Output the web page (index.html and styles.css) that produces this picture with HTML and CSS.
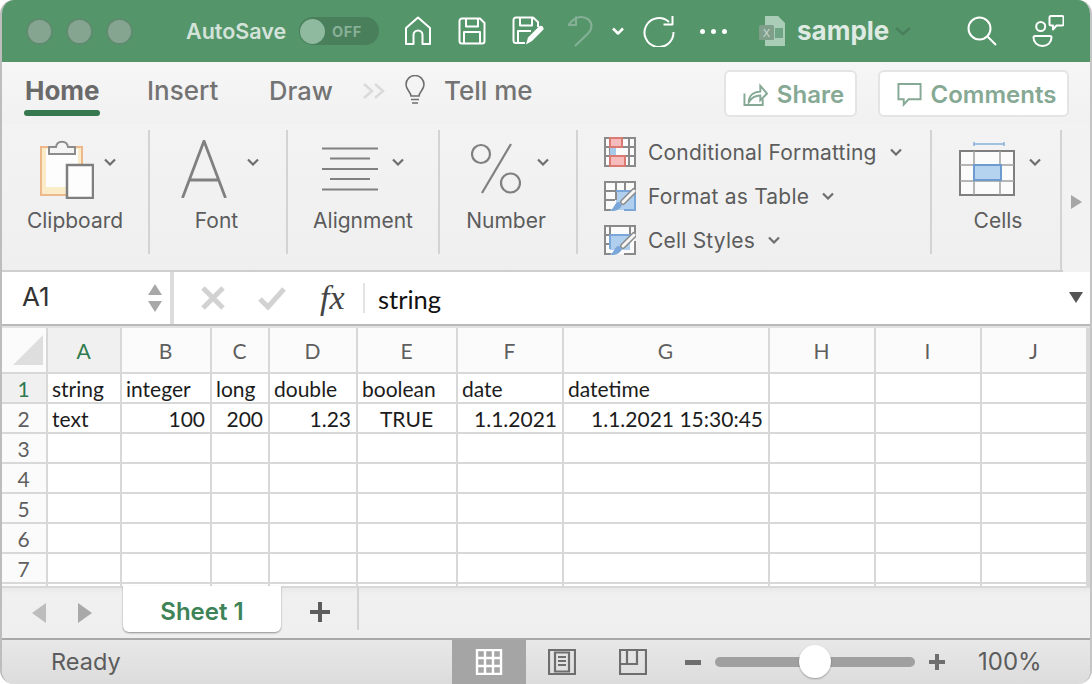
FILE: index.html
```html
<!DOCTYPE html>
<html lang="en">
<head>
    <meta charset="UTF-8">
    <meta name="viewport" content="width=device-width, initial-scale=1.0">
    <title>sample</title>
    <link rel="stylesheet" href="styles.css">
</head>
<body>
<div class="window">

    <!-- Title bar -->
    <header class="titlebar">
        <div class="lights"><span></span><span></span><span></span></div>
        <span class="autosave">AutoSave</span>
        <div class="toggle"><span class="knob"></span><span class="off">OFF</span></div>
        <svg class="tb home" viewBox="0 0 28 30"><path d="M2 28V12L14 1.500 26 12v16h-7.500V19a4.500 4.500 0 0 0-9 0v9z"/></svg>
        <svg class="tb save" viewBox="0 0 28 28"><path d="M4 1.500h18l4.500 4.500v18a2.500 2.500 0 0 1-2.500 2.500H4A2.500 2.500 0 0 1 1.500 24V4A2.500 2.500 0 0 1 4 1.500zM8 1.500v8h12v-8M6 26.500V15h16v11.500"/></svg>
        <svg class="tb saveas" viewBox="0 0 32 30"><path d="M13 27H4a2.500 2.500 0 0 1-2.500-2.500V4A2.500 2.500 0 0 1 4 1.500h17L26 6v5M8 1.500v8h12v-8M6 27V15h13"/><path class="fill" d="M14 28.500l2-7 11-11c1.500-1.500 5-.5 4.500 3L20 25z"/></svg>
        <svg class="tb undo dim" viewBox="0 0 26 32"><path d="M1 10h8V1.500M1.500 10C6 4 10 2 14 2c6 0 10.500 4 10.500 9 0 3-1.500 5.500-3.500 7.500L8 31"/></svg>
        <svg class="tb chev" viewBox="0 0 12 8"><path d="M1 1.500l5 5 5-5"/></svg>
        <svg class="tb redo" viewBox="0 0 32 32"><path d="M26 7A14.500 14.500 0 1 0 30.500 17M20.500 9.500h9V1"/></svg>
        <div class="dots"><span></span><span></span><span></span></div>
        <svg class="fileicon" viewBox="0 0 26 30">
            <path fill="#a9cdb6" d="M6 0h13l7 7v23H6z"/>
            <rect x="0" y="9" width="15" height="15" rx="1.500" fill="#7f9f8b"/>
            <rect x="16" y="12" width="8" height="10" fill="#6fa584"/>
            <text x="7.500" y="21" class="filex">X</text>
        </svg>
        <span class="filename">sample</span>
        <svg class="tb filechev" viewBox="0 0 16 9"><path d="M1 1l7 6 7-6"/></svg>
        <svg class="tb search" viewBox="0 0 30 30"><circle cx="12.500" cy="12.500" r="11"/><path d="M20.500 20.500l8.500 8.500"/></svg>
        <svg class="tb person" viewBox="0 0 32 32"><circle cx="8.700" cy="11.500" r="4.500"/><path d="M3 21h15a1.500 1.500 0 0 1 1.500 1.500c0 5-4 8.500-9 8.500s-9-3.500-9-8.500A1.500 1.500 0 0 1 3 21zM19 1h11a1.500 1.500 0 0 1 1.500 1.500V9a1.500 1.500 0 0 1-1.500 1.500h-5.500l-3.500 4v-4h-2A1.500 1.500 0 0 1 17.500 9V2.500A1.500 1.500 0 0 1 19 1z"/></svg>
    </header>

    <!-- Tabs row -->
    <nav class="tabs">
        <a class="tab active">Home</a>
        <a class="tab insert">Insert</a>
        <a class="tab draw">Draw</a>
        <svg class="more" viewBox="0 0 24 18"><path d="M2 2l8 7-8 7M13 2l8 7-8 7"/></svg>
        <svg class="bulb" viewBox="0 0 20 32"><path d="M6 21c0-4-5-6-5-11.500a9 9 0 0 1 18 0C19 15 14 17 14 21zM6 24.500h8M7 28h6"/></svg>
        <a class="tab tell">Tell me</a>
        <button class="action share">
            <svg viewBox="0 0 26 26"><path d="M1.500 12v12h19v-6M6 21c0-7 5-11 12-11V4l7 8-7 7v-5c-5 0-9 2-12 7z"/></svg>
            Share
        </button>
        <button class="action comments">
            <svg viewBox="0 0 26 26"><path d="M1.500 2h23v16H12l-5 5.500V18H1.500z"/></svg>
            Comments
        </button>
    </nav>

    <!-- Ribbon -->
    <section class="ribbon">
        <div class="group g-clip">
            <div class="group-top">
                <svg class="ic-clip" viewBox="0 0 54 60">
                    <rect x="1" y="8" width="41" height="48" fill="#faecc8" stroke="#eeb98a" stroke-width="2"/>
                    <rect x="6" y="10" width="32" height="38" fill="#fdfdfd"/>
                    <path d="M9 15V8h7c1-7 11-7 12 0h7v7z" fill="#f4f4f4" stroke="#8c8c8c" stroke-width="2"/>
                    <rect x="27" y="26" width="26" height="33" fill="#fdfdfd" stroke="#7f7f7f" stroke-width="2.500"/>
                </svg>
                <svg class="caret" viewBox="0 0 12 8"><path d="M1 1.500l5 5 5-5"/></svg>
            </div>
            <span class="group-label">Clipboard</span>
        </div>
        <div class="group g-font">
            <div class="group-top">
                <svg class="ic-font" viewBox="0 0 46 58"><path d="M1.500 58L23 1l21.500 57M8 40h30"/></svg>
                <svg class="caret" viewBox="0 0 12 8"><path d="M1 1.500l5 5 5-5"/></svg>
            </div>
            <span class="group-label">Font</span>
        </div>
        <div class="group g-align">
            <div class="group-top">
                <svg class="ic-align" viewBox="0 0 56 44"><path d="M0 1.500h56M8 11.500h40M0 22h56M8 32h40M0 42.500h56"/></svg>
                <svg class="caret" viewBox="0 0 12 8"><path d="M1 1.500l5 5 5-5"/></svg>
            </div>
            <span class="group-label">Alignment</span>
        </div>
        <div class="group g-num">
            <div class="group-top">
                <svg class="ic-num" viewBox="0 0 50 52"><circle cx="10" cy="11" r="9"/><circle cx="39.500" cy="40" r="9.500"/><path d="M40 1L11 50"/></svg>
                <svg class="caret" viewBox="0 0 12 8"><path d="M1 1.500l5 5 5-5"/></svg>
            </div>
            <span class="group-label">Number</span>
        </div>
        <div class="group g-styles">
            <div class="style-row">
                <svg class="ic-style" viewBox="0 0 32 30">
                    <rect x="1" y="1" width="30" height="28" fill="#fbfbfb"/>
                    <path class="gl" d="M1 1h30v28H1zM1 10h30M1 19h30M6 1v28M18 1v28M25 1v28"/>
                    <rect x="6" y="10" width="6" height="9" fill="#a9c9ea"/>
                    <rect x="13" y="11" width="11" height="7" fill="#fbfbfb"/>
                    <rect x="6" y="1" width="12" height="9" fill="#f6bcbc" stroke="#db7a72" stroke-width="2"/>
                    <rect x="6" y="19" width="15" height="10" fill="#f6bcbc" stroke="#db7a72" stroke-width="2"/>
                </svg>
                <span>Conditional Formatting</span>
                <svg class="caret" viewBox="0 0 12 8"><path d="M1 1.500l5 5 5-5"/></svg>
            </div>
            <div class="style-row">
                <svg class="ic-style" viewBox="0 0 32 30">
                    <rect x="1" y="1" width="30" height="28" fill="#fbfbfb"/>
                    <rect x="12" y="10" width="19" height="19" fill="#b0cfee"/>
                    <path class="gl" d="M31 9V1H1v28h6M1 10h30M1 19h10M12 1v18M21 1v9"/>
                    <path class="bl" d="M12 10h19v19H20"/>
                    <path class="brush-o" d="M30 10L19 21"/>
                    <path class="brush-i" d="M30 10L19 21"/>
                    <path class="brush-h" d="M5 30c5 1 11-1 13-6l-3-3c-5 0-4 7-10 9z"/>
                </svg>
                <span>Format as Table</span>
                <svg class="caret" viewBox="0 0 12 8"><path d="M1 1.500l5 5 5-5"/></svg>
            </div>
            <div class="style-row">
                <svg class="ic-style" viewBox="0 0 32 30">
                    <rect x="1" y="1" width="30" height="28" fill="#fbfbfb"/>
                    <rect x="6" y="10" width="20" height="15" fill="#b0cfee"/>
                    <path class="gl" d="M31 8V1H1v28h6M31 16v13H20M6 1v20M1 10h5M1 19h5M26 1v9"/>
                    <path class="bl" d="M6 10h21M6 10v14"/>
                    <path class="brush-o" d="M30 10L19 21"/>
                    <path class="brush-i" d="M30 10L19 21"/>
                    <path class="brush-h" d="M5 30c5 1 11-1 13-6l-3-3c-5 0-4 7-10 9z"/>
                </svg>
                <span>Cell Styles</span>
                <svg class="caret" viewBox="0 0 12 8"><path d="M1 1.500l5 5 5-5"/></svg>
            </div>
        </div>
        <div class="group g-cells">
            <div class="group-top">
                <svg class="ic-cells" viewBox="0 0 56 54">
                    <path d="M15 2h30M15 0v4M45 0v4" stroke="#84b2de" stroke-width="1.500" fill="none"/>
                    <rect x="1" y="9" width="54" height="44" fill="#fbfbfb" stroke="#7f7f7f" stroke-width="2"/>
                    <path d="M1 23h54M1 39h54M15 9v44M41 9v44" stroke="#a0a0a0" stroke-width="1.500"/>
                    <rect x="15" y="23" width="27" height="15" fill="#b5d2ee" stroke="#6d9bd0" stroke-width="2"/>
                </svg>
                <svg class="caret" viewBox="0 0 12 8"><path d="M1 1.500l5 5 5-5"/></svg>
            </div>
            <span class="group-label">Cells</span>
        </div>
        <div class="ribbon-end"><span class="tri-right"></span></div>
    </section>

    <!-- Formula bar -->
    <section class="formula">
        <div class="namebox">
            <span class="nameval">A1</span>
            <div class="spin"><i class="up"></i><i class="down"></i></div>
        </div>
        <div class="fbar">
            <svg class="f-x" viewBox="0 0 24 24"><path d="M2 2l20 20M22 2L2 22"/></svg>
            <svg class="f-ok" viewBox="0 0 28 24"><path d="M2 13l8 8L26 3"/></svg>
            <span class="fx">fx</span>
            <span class="fsep"></span>
            <span class="fval">string</span>
            <i class="fdrop"></i>
        </div>
    </section>

    <!-- Sheet -->
    <section class="sheet">
        <table class="cells">
            <colgroup>
                <col class="c0"><col class="ca"><col class="cb"><col class="cc"><col class="cd"><col class="ce"><col class="cf"><col class="cg"><col class="cx"><col class="cx"><col class="cx"><col>
            </colgroup>
            <thead>
                <tr>
                    <th class="corner"><span></span></th>
                    <th class="sel">A</th><th>B</th><th>C</th><th>D</th><th>E</th><th>F</th><th>G</th><th>H</th><th>I</th><th>J</th><th></th>
                </tr>
            </thead>
            <tbody>
                <tr>
                    <th class="sel">1</th>
                    <td>string</td><td>integer</td><td>long</td><td>double</td><td>boolean</td><td>date</td><td>datetime</td><td></td><td></td><td></td><td></td>
                </tr>
                <tr>
                    <th>2</th>
                    <td>text</td><td class="num">100</td><td class="num">200</td><td class="num">1.23</td><td class="mid">TRUE</td><td class="num">1.1.2021</td><td class="num">1.1.2021 15:30:45</td><td></td><td></td><td></td><td></td>
                </tr>
                <tr><th>3</th><td></td><td></td><td></td><td></td><td></td><td></td><td></td><td></td><td></td><td></td><td></td></tr>
                <tr><th>4</th><td></td><td></td><td></td><td></td><td></td><td></td><td></td><td></td><td></td><td></td><td></td></tr>
                <tr><th>5</th><td></td><td></td><td></td><td></td><td></td><td></td><td></td><td></td><td></td><td></td><td></td></tr>
                <tr><th>6</th><td></td><td></td><td></td><td></td><td></td><td></td><td></td><td></td><td></td><td></td><td></td></tr>
                <tr><th>7</th><td></td><td></td><td></td><td></td><td></td><td></td><td></td><td></td><td></td><td></td><td></td></tr>
                <tr><th></th><td></td><td></td><td></td><td></td><td></td><td></td><td></td><td></td><td></td><td></td><td></td></tr>
            </tbody>
        </table>
    </section>

    <!-- Sheet tabs -->
    <section class="sheetbar">
        <i class="nav left"></i>
        <i class="nav right"></i>
        <div class="sheettab">Sheet 1</div>
        <span class="plus"></span>
        <span class="barsep"></span>
    </section>

    <!-- Status bar -->
    <footer class="status">
        <span class="ready">Ready</span>
        <div class="view active">
            <svg viewBox="0 0 26 26"><path class="vw-on" d="M1 1h24v24H1zM9 1v24M17 1v24M1 9h24M1 17h24"/></svg>
        </div>
        <div class="view">
            <svg viewBox="0 0 28 26"><path class="vw" d="M1 1h26v24H1zM7 3.500h14v19H7z"/><path class="vw" d="M10 8h8M10 12h8M10 16h8"/></svg>
        </div>
        <div class="view">
            <svg viewBox="0 0 28 26"><path class="vw" d="M1 1h26v24H1zM1 15h17V1M8 1v14"/></svg>
        </div>
        <span class="zoom-sign minus"></span>
        <div class="slider"><span class="thumb"></span></div>
        <span class="zoom-sign pluss"></span>
        <span class="pct">100%</span>
    </footer>
</div>
</body>
</html>
```

FILE: styles.css
```css
/* General */
* {
    box-sizing: border-box;
}

html, body {
    margin: 0;
    padding: 0;
    background: #fff;
    height: 684px;
    overflow: hidden;
}

body {
    font-family: Inter, "Liberation Sans", sans-serif;
    color: #5c5c5c;
}

svg {
    display: block;
    flex: none;
}

.window {
    width: 1092px;
    height: 684px;
    display: flex;
    flex-direction: column;
    border-radius: 14px;
    overflow: hidden;
    border-left: 2px solid #bdbdbd;
    border-right: 2px solid #c4c4c4;
    background: #f2f2f2;
}

/* Title bar */
.titlebar {
    height: 62px;
    flex: none;
    margin: 0 -2px;
    background: #54956a;
    display: flex;
    align-items: center;
    position: relative;
}

.lights {
    display: flex;
    gap: 13px;
    margin-left: 26px;
}

.lights span {
    width: 27px;
    height: 27px;
    border-radius: 50%;
    background: #86a590;
    border: 2px solid #5f8b6f;
}

.autosave {
    margin-left: 53px;
    width: 113px;
    font-size: 21.500px;
    font-weight: 600;
    color: #d3e3d9;
    white-space: nowrap;
}

.toggle {
    width: 80px;
    height: 28px;
    border-radius: 14px;
    background: #4a7f5c;
    display: flex;
    align-items: center;
    padding-left: 1px;
}

.knob {
    width: 25px;
    height: 25px;
    border-radius: 50%;
    background: #8fba9f;
}

.off {
    margin-left: 7px;
    font-size: 14.500px;
    font-weight: 700;
    letter-spacing: .5px;
    color: #88b096;
}

.tb {
    fill: none;
    stroke: #fff;
    stroke-width: 2;
    stroke-linejoin: round;
}

.tb .fill {
    fill: #fff;
    stroke: none;
}

.tb.dim {
    stroke: #86b196;
}

.home { width: 28px; height: 30px; margin-left: 25px; }
.save { width: 28px; height: 28px; margin-left: 26px; }
.saveas { width: 32px; height: 30px; margin-left: 26px; }
.undo { width: 26px; height: 32px; margin-left: 23px; }
.chev { width: 12px; height: 8px; margin-left: 19px; stroke-width: 2.500; }
.redo { width: 32px; height: 32px; margin-left: 19px; }

.dots {
    display: flex;
    gap: 6px;
    margin-left: 25px;
}

.dots span {
    width: 5px;
    height: 5px;
    border-radius: 50%;
    background: #fff;
}

.fileicon {
    width: 26px;
    height: 30px;
    margin-left: 32px;
}

.filex {
    font-size: 11px;
    fill: #c7d8cd;
    text-anchor: middle;
}

.filename {
    margin-left: 12px;
    margin-top: -2px;
    font-size: 26px;
    font-weight: 700;
    color: #dfeae3;
}

.filechev {
    width: 16px;
    height: 9px;
    margin-left: 6px;
    stroke: #4a7f5c;
    stroke-width: 2.500;
}

.search { width: 30px; height: 30px; margin-left: 56px; }
.person { width: 32px; height: 32px; margin-left: 35px; }

/* Tabs */
.tabs {
    height: 62px;
    flex: none;
    display: flex;
    align-items: center;
    padding-left: 23px;
    background: linear-gradient(#f6f6f6, #f1f1f1);
    position: relative;
}

.tab {
    font-size: 26px;
    font-weight: 500;
    color: #737373;
    margin-top: -5px;
}

.tab.active {
    font-weight: 700;
    width: 122px;
    color: #6a6a6a;
    position: relative;
}

.tab.active::after {
    content: "";
    position: absolute;
    left: -1px;
    bottom: -10px;
    width: 76px;
    height: 6px;
    border-radius: 3px;
    background: #37784f;
}

.insert { width: 122px; }
.draw { width: 93px; font-size: 25.500px; }

.more {
    width: 24px;
    height: 18px;
    fill: none;
    stroke: #dadada;
    stroke-width: 2.500;
    margin-top: -4px;
}

.bulb {
    width: 20px;
    height: 32px;
    margin-left: 19px;
    margin-top: -4px;
    fill: none;
    stroke: #6f6f6f;
    stroke-width: 1.600;
}

.tell { margin-left: 19px; }

.action {
    height: 47px;
    background: #fff;
    border: 2px solid #e4e4e4;
    border-radius: 6px;
    display: flex;
    align-items: center;
    justify-content: center;
    gap: 9px;
    font: 600 24px Inter, "Liberation Sans", sans-serif;
    color: #85a994;
    padding: 3px 0 0 6px;
}

.action svg {
    width: 25px;
    height: 25px;
    fill: none;
    stroke: #85a994;
    stroke-width: 2;
}

.share { width: 133px; margin-left: auto; }
.comments { width: 191px; margin-left: 21px; margin-right: 21px; }

/* Ribbon */
.ribbon {
    height: 148px;
    flex: none;
    display: flex;
    padding-top: 6px;
    background: linear-gradient(#f3f3f3, #efefef);
    border-bottom: 2px solid #cfcfcf;
    margin-right: 27px;
    position: relative;
}

.group {
    height: 124px;
    flex: none;
    border-right: 2px solid #d3d3d3;
    display: flex;
    flex-direction: column;
    align-items: center;
}

.group-top {
    height: 78px;
    display: flex;
    align-items: center;
    gap: 10px;
}

.group-label {
    font-size: 21px;
    line-height: 26px;
    color: #5c5c5c;
}

.caret {
    width: 12px;
    height: 8px;
    fill: none;
    stroke: #6e6e6e;
    stroke-width: 2.200;
    margin-top: -14px;
}

.g-clip { width: 148px; }
.g-clip .group-top { padding-left: 6px; }
.g-font { width: 138px; }
.g-font .group-label { margin-left: -3px; }
.g-align { width: 152px; }
.g-align .group-top { gap: 6px; }
.g-num { width: 138px; }
.g-num .group-top { gap: 8px; padding-left: 4px; }
.g-num .group-label { margin-left: -4px; }
.g-styles { width: 354px; padding-left: 26px; align-items: flex-start; }
.g-cells { width: 130px; height: 140px; }
.g-cells .group-top { gap: 14px; padding-left: 8px; }
.g-cells .group-label { margin-left: 4px; }

.ic-clip { width: 54px; height: 60px; }
.ic-font { width: 46px; height: 58px; fill: none; stroke: #808080; stroke-width: 2.800; margin-left: 4px; margin-right: 10px; }
.ic-align { width: 56px; height: 44px; fill: none; stroke: #808080; stroke-width: 2; margin-right: 8px; }
.ic-num { width: 50px; height: 52px; fill: none; stroke: #808080; stroke-width: 2.200; margin-right: 8px; }
.ic-cells { width: 56px; height: 54px; }

.style-row {
    height: 44px;
    flex: none;
    display: flex;
    align-items: center;
    gap: 12px;
    font-size: 21px;
    letter-spacing: .2px;
    color: #5c5c5c;
}

.style-row .caret {
    margin-top: 0;
    margin-left: 1px;
}

.ic-style {
    width: 32px;
    height: 30px;
    fill: none;
}

.gl {
    fill: none;
    stroke: #8a8a8a;
    stroke-width: 2;
}

.bl {
    fill: none;
    stroke: #7ba6d8;
    stroke-width: 2;
}

.brush-o {
    stroke: #8a8a8a;
    stroke-width: 6;
    stroke-linecap: round;
}

.brush-i {
    stroke: #f6f6f6;
    stroke-width: 3;
    stroke-linecap: round;
}

.brush-h {
    fill: #7ba6d8;
}

.ribbon-end {
    position: absolute;
    right: -27px;
    top: 0;
    bottom: 0;
    width: 27px;
    display: flex;
    align-items: center;
    justify-content: center;
}

.tri-right {
    border-left: 11px solid #a6a6a6;
    border-top: 7px solid transparent;
    border-bottom: 7px solid transparent;
    margin-top: 10px;
}

/* Formula bar */
.formula {
    height: 54px;
    flex: none;
    display: flex;
    gap: 4px;
    background: #dcdcdc;
    border-bottom: 2px solid #b9b9b9;
}

.namebox {
    width: 168px;
    background: #fff;
    display: flex;
    align-items: center;
    justify-content: space-between;
    padding: 0 8px 0 20px;
    font-size: 26px;
    color: #333;
}

.nameval {
    margin-top: -3px;
}

.spin {
    display: flex;
    flex-direction: column;
    gap: 6px;
}

.spin i {
    border-left: 7px solid transparent;
    border-right: 7px solid transparent;
}

.spin .up { border-bottom: 11px solid #a8a8a8; }
.spin .down { border-top: 11px solid #a8a8a8; }

.fbar {
    flex: 1;
    background: #fff;
    display: flex;
    align-items: center;
    position: relative;
}

.f-x {
    width: 24px;
    height: 24px;
    margin-left: 27px;
    fill: none;
    stroke: #d2d2d2;
    stroke-width: 5;
}

.f-ok {
    width: 28px;
    height: 24px;
    margin-left: 33px;
    fill: none;
    stroke: #d2d2d2;
    stroke-width: 5;
}

.fx {
    margin-left: 34px;
    font: italic 34px "Liberation Serif", serif;
    color: #444;
    width: 43px;
}

.fsep {
    width: 2px;
    height: 30px;
    background: #e3e3e3;
}

.fval {
    margin-left: 13px;
    margin-top: 2px;
    font: 25.500px Lato, "Open Sans", sans-serif;
    color: #111;
}

.fdrop {
    position: absolute;
    right: 7px;
    top: 20px;
    border-left: 7px solid transparent;
    border-right: 7px solid transparent;
    border-top: 11px solid #555;
}

/* Sheet */
.sheet {
    height: 260px;
    flex: none;
    overflow: hidden;
    background: #fff;
    border-top: 2px solid #e2e2e2;
}

.cells {
    table-layout: fixed;
    border-collapse: separate;
    border-spacing: 0;
    width: 1088px;
    font: 21px Lato, "Open Sans", sans-serif;
    color: #1c1c1c;
}

.c0 { width: 46px; }
.ca { width: 74px; }
.cb { width: 90px; }
.cc { width: 58px; }
.cd { width: 88px; }
.ce { width: 100px; }
.cf { width: 106px; }
.cg { width: 206px; }
.cx { width: 106px; }

.cells th, .cells td {
    height: 30px;
    padding: 0 5px 0 4px;
    border-right: 2px solid #d8d8d8;
    border-bottom: 2px solid #d8d8d8;
    white-space: nowrap;
    overflow: hidden;
}

.cells th {
    font-weight: 400;
    color: #5f5f5f;
    text-align: center;
    background: #fbfbfb;
}

.cells thead th {
    height: 46px;
}

.cells th.sel {
    color: #2f7a4d;
    background: #f0f0f0;
}

.cells td.num { text-align: right; }
.cells td.mid { text-align: center; }

.cells .corner {
    padding: 0;
    background: #fbfbfb;
}

.corner span {
    display: block;
    width: 0;
    height: 0;
    margin: 0 0 0 11px;
    border-left: 30px solid transparent;
    border-bottom: 30px solid #dedede;
}

/* Sheet tabs */
.sheetbar {
    height: 52px;
    flex: none;
    display: flex;
    align-items: flex-start;
    background: linear-gradient(#e9e9e9 0, #f0f0f0 6px, #efefef);
    border-top: 2px solid #d8d8d8;
}

.nav {
    margin-top: 15px;
    border-top: 10px solid transparent;
    border-bottom: 10px solid transparent;
}

.nav.left {
    margin-left: 30px;
    border-right: 14px solid #bdbdbd;
}

.nav.right {
    margin-left: 32px;
    border-left: 14px solid #a9a9a9;
}

.sheettab {
    margin-left: 31px;
    margin-top: -2px;
    width: 158px;
    height: 46px;
    padding-top: 5px;
    background: #fff;
    border-radius: 0 0 6px 6px;
    box-shadow: 0 1px 2px rgba(0, 0, 0, .4);
    font-size: 24px;
    font-weight: 600;
    color: #3e8258;
    display: flex;
    align-items: center;
    justify-content: center;
}

.plus {
    width: 20px;
    height: 20px;
    margin: 14px 0 0 29px;
    background:
        linear-gradient(#5c5c5c, #5c5c5c) center / 100% 4px no-repeat,
        linear-gradient(#5c5c5c, #5c5c5c) center / 4px 100% no-repeat;
}

.barsep {
    width: 2px;
    height: 42px;
    margin-left: 27px;
    background: #d3d3d3;
}

/* Status bar */
.status {
    flex: 1;
    display: flex;
    align-items: center;
    background: linear-gradient(#e8e8e8, #dcdcdc);
    border-top: 2px solid #a8a8a8;
    font-size: 23.500px;
    color: #5c5c5c;
}

.ready {
    margin-left: 49px;
    margin-top: -2px;
    width: 401px;
}

.view {
    width: 71px;
    height: 100%;
    display: flex;
    align-items: center;
    justify-content: center;
}

.view.active {
    width: 74px;
    background: #a5a5a5;
}

.view svg {
    width: 28px;
    height: 26px;
}

.vw {
    fill: none;
    stroke: #6e6e6e;
    stroke-width: 2.200;
}

.vw-on {
    fill: none;
    stroke: #fff;
    stroke-width: 2.400;
}

.zoom-sign {
    width: 16px;
    height: 5px;
    background: #6e6e6e;
}

.minus { margin-left: 17px; }

.slider {
    width: 200px;
    height: 10px;
    margin: 0 14px;
    border-radius: 5px;
    background: #a0a0a0;
    position: relative;
}

.thumb {
    position: absolute;
    left: 84px;
    top: -12px;
    width: 32px;
    height: 33px;
    border-radius: 50%;
    background: #fff;
    box-shadow: 0 1px 2px rgba(0, 0, 0, .3);
}

.pluss {
    background:
        linear-gradient(#6e6e6e, #6e6e6e) center / 100% 4px no-repeat,
        linear-gradient(#6e6e6e, #6e6e6e) center / 4px 100% no-repeat;
    height: 16px;
}

.pct {
    margin-left: 33px;
    margin-top: -2px;
    font-size: 24px;
}
```
